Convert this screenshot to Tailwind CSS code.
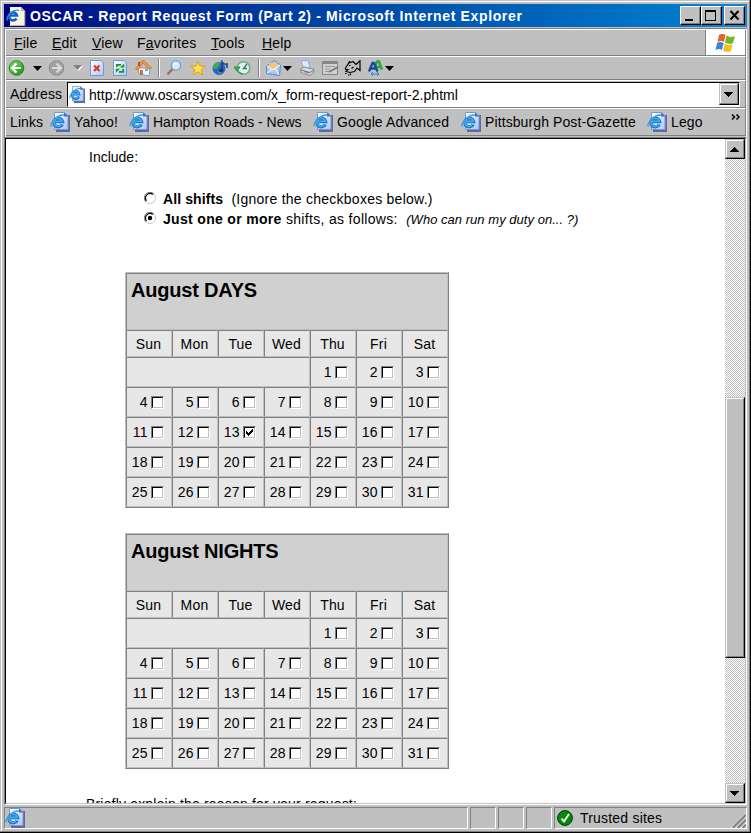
<!DOCTYPE html>
<html lang="en">
<head>
<meta charset="utf-8">
<title>OSCAR - Report Request Form (Part 2)</title>
<script src="https://cdn.jsdelivr.net/npm/@tailwindcss/browser@4"></script>
</head>
<body class="w-[751px] h-[833px] overflow-hidden bg-[#c0c0c0] text-black font-['Liberation_Sans',Arial,sans-serif] text-[14px] leading-[20px]">
<svg width="0" height="0" class="absolute">
  <defs>
    <linearGradient id="pg" x1="0" y1="0" x2="1" y2="1"><stop offset="0" stop-color="#fff"/><stop offset="1" stop-color="#a9c8f8"/></linearGradient>
    <linearGradient id="gr" x1="0" y1="0" x2="1" y2="1"><stop offset="0" stop-color="#8be070"/><stop offset="1" stop-color="#138a12"/></linearGradient>
    <symbol id="ie" viewBox="0 0 20 20">
      <path d="M6 3H20V20H6Z" fill="#65679b"/>
      <path d="M4.500 .5H14.500L18 4V17.500H4.500Z" fill="url(#pg)" stroke="#7597d8"/>
      <path d="M14 .5V4.500H18Z" fill="#3e66ba"/>
      <path d="M12.300 12.300A4.400 4.400 0 1 1 12.600 9.600H4.500" fill="none" stroke="#1c6fc0" stroke-width="3.200"/>
      <path d="M12 12A4.200 4.200 0 1 1 12.300 9.400H5" fill="none" stroke="#45aeea" stroke-width="1.600"/>
      <path d="M1.500 14.500C-1 11 9 1.500 14.500 3.300" fill="none" stroke="#3c9de0" stroke-width="1.300"/>
    </symbol>
    <symbol id="down" viewBox="0 0 9 5"><path d="M0 0H9L4.500 5Z" fill="currentColor"/></symbol>
    <pattern id="dither" width="2" height="2" patternUnits="userSpaceOnUse"><path d="M0 0H2V2H0Z" fill="#fff"/><path d="M0 0H1V1H0ZM1 1H2V2H1Z" fill="#c0c0c0"/></pattern>
  </defs>
</svg>

<div class="w-[751px] h-[833px] border-r border-b border-black">
<div class="w-[750px] h-[832px] border-t border-l border-t-[#c0c0c0] border-l-[#c0c0c0] border-r border-b border-r-[#808080] border-b-[#808080]">
<div class="w-[748px] h-[830px] border-t border-l border-white pt-[2px] pl-[2px] flex flex-col">

  <!-- Title bar -->
  <header class="w-[743px] h-[23px] flex items-center shrink-0 bg-linear-to-r from-[#000080] to-[#1084d0] text-white">
    <svg class="w-[20px] h-[20px] ml-[2px]" viewBox="0 0 20 20">
      <path d="M4 1H15L19 5V20H4Z" fill="#f7f4e6"/><path d="M19 5V20H5" fill="none" stroke="#77705e"/><path d="M15 1V5H19Z" fill="#b9b59f"/>
      <path d="M10.500 12.500A4 4 0 1 1 11 9.500H3" fill="none" stroke="#1267bd" stroke-width="2.600"/>
      <path d="M1.500 14.500C-1 11 7 2.500 13 4.500" fill="none" stroke="#2f8fe0" stroke-width="1.300"/>
    </svg>
    <span class="ml-[4px] font-bold whitespace-pre tracking-[0.65px]">OSCAR - Report Request Form (Part 2) - Microsoft Internet Explorer</span>
    <div class="ml-auto mr-[2px] flex">
      <span class="w-[21px] h-[19px] border border-t-white border-l-white border-r-black border-b-black bg-[#c0c0c0]"><svg class="w-[19px] h-[17px]" viewBox="0 0 19 17" shape-rendering="crispEdges"><path d="M18.500 0V16.500H0" fill="none" stroke="#808080"/><path d="M4 12H12V14H4Z"/></svg></span>
      <span class="w-[21px] h-[19px] border border-t-white border-l-white border-r-black border-b-black bg-[#c0c0c0]"><svg class="w-[19px] h-[17px]" viewBox="0 0 19 17" shape-rendering="crispEdges"><path d="M18.500 0V16.500H0" fill="none" stroke="#808080"/><path d="M3 3H14V14H3ZM4 5V13H13V5Z" fill-rule="evenodd"/></svg></span>
      <span class="ml-[2px] w-[21px] h-[19px] border border-t-white border-l-white border-r-black border-b-black bg-[#c0c0c0]"><svg class="w-[19px] h-[17px]" viewBox="0 0 19 17"><path d="M18.500 0V16.500H0" fill="none" stroke="#808080"/><path d="M5.500 4L13.500 12.500M13.500 4L5.500 12.500" stroke="#000" stroke-width="2"/></svg></span>
    </div>
  </header>

  <!-- Tool bands -->
  <div class="mt-[1px] w-[743px] h-[109px] shrink-0 border-t border-l border-[#808080]">
  <div class="w-[742px] h-[108px] border-t border-l border-r border-white border-r-white">
    <div class="w-[740px] h-[26px] border-b border-r border-[#808080] flex">
      <nav class="flex pl-[8px] pt-[3px] w-[699px] shrink-0 tracking-[0.2px]">
        <span class="w-[38px]"><u>F</u>ile</span><span class="w-[40px]"><u>E</u>dit</span><span class="w-[45px]"><u>V</u>iew</span><span class="w-[74px]">F<u>a</u>vorites</span><span class="w-[51px]"><u>T</u>ools</span><span><u>H</u>elp</span>
      </nav>
      <div class="flex-1 h-[25px] border-l border-[#808080] bg-white flex items-center justify-center">
        <svg class="w-[21px] h-[20px]" viewBox="0 0 21 20"><path d="M4 2Q7 0 10.500 2L9 9Q6 7 2.500 9Z" fill="#e8602c"/><path d="M11.500 2.500Q15 5 20 3L18 10Q14 12 10 9.500Z" fill="#72b82c"/><path d="M2 10Q5 8 8.700 10L7 17Q4 15 .5 17Z" fill="#3c84d8"/><path d="M9.800 10.500Q13 13 17.700 11L16 18Q12 20 8 17.500Z" fill="#f6bd25"/></svg>
      </div>
    </div>
    <div class="w-[740px] h-[24px] border-t border-t-white border-b border-r border-b-[#808080] border-r-[#808080] flex items-center pl-[2px]">
      <svg class="w-[17px] h-[16px]" viewBox="0 0 17 16"><circle cx="8.500" cy="8" r="7.300" fill="url(#gr)" stroke="#218a21"/><path d="M8.500 3.500L4 8L8.500 12.500M4.500 8H13" fill="none" stroke="#fff" stroke-width="2.200"/></svg>
      <svg class="w-[9px] h-[5px] ml-[8px]"><use href="#down"/></svg>
      <svg class="w-[17px] h-[16px] ml-[6px]" viewBox="0 0 17 16"><circle cx="8.500" cy="8" r="7.300" fill="#a2a2a2" stroke="#8a8a8a"/><path d="M8.500 3.500L13 8L8.500 12.500M12.500 8H4" fill="none" stroke="#dadada" stroke-width="2.200"/></svg>
      <svg class="w-[10px] h-[6px] ml-[8px]" viewBox="0 0 10 6"><path d="M1 1H10L5.500 6Z" fill="#fff"/><path d="M0 0H9L4.500 5Z" fill="#808080"/></svg>
      <svg class="w-[14px] h-[16px] ml-[7px]" viewBox="0 0 14 16"><path d="M.5 .5H11L13.500 3V15.500H.5Z" fill="url(#pg)" stroke="#7597d8"/><path d="M4 5.500L9.500 11M9.500 5.500L4 11" stroke="#e03316" stroke-width="2"/></svg>
      <svg class="w-[14px] h-[16px] ml-[9px]" viewBox="0 0 14 16"><path d="M.5 .5H11L13.500 3V15.500H.5Z" fill="url(#pg)" stroke="#7597d8"/><path d="M3.800 7V4.800H8M10.200 9V11.800H6" fill="none" stroke="#159625" stroke-width="1.700"/><path d="M7 7.500H11.200V3.500ZM7 8.700H2.800V12.800Z" fill="#159625"/></svg>
      <svg class="w-[17px] h-[17px] ml-[8px]" viewBox="0 0 17 17"><path d="M3 8H15L14 16L4 14Z" fill="#f5f7fb" stroke="#829ac5"/><path d="M.5 9L6 1.500L9 .5L16.500 8L14 9L8 3L3 10Z" fill="#f59a37" stroke="#be6a20" stroke-width=".7"/><path d="M4 2V6" stroke="#b84a25" stroke-width="2"/><path d="M5 10H8V15H5Z" fill="#bc7642"/><path d="M10 8H13V11H10Z" fill="#78a8e4"/></svg>
      <span class="ml-[6px] w-[2px] h-[18px] border-l border-l-[#808080] border-r border-r-white"></span>
      <svg class="w-[16px] h-[16px] ml-[6px]" viewBox="0 0 16 16"><path d="M6.500 9L1.500 14.500" stroke="#a87052" stroke-width="2.500"/><circle cx="10" cy="5.500" r="4.600" fill="#d5eaff" stroke="#6f9de0" stroke-width="1.400"/><path d="M7.500 5Q8.500 3 10.500 3" stroke="#fff" fill="none" stroke-width="1.500"/></svg>
      <svg class="w-[16px] h-[16px] ml-[8px]" viewBox="0 0 16 16"><path d="M8 1L10 6L15.300 6.200L11.200 9.500L12.700 15L8 11.800L3.300 15L4.800 9.500L.7 6.200L6 6Z" fill="#ffdf50" stroke="#d9a21b"/></svg>
      <svg class="w-[16px] h-[16px] ml-[6px]" viewBox="0 0 16 16"><circle cx="7" cy="8.500" r="6.500" fill="#2467c9"/><path d="M2 5Q5 1 8 3L7 6L4 9L1 8ZM6 10L10 9L11 12L7 14Z" fill="#3fae4b"/><path d="M10 10V2Q12 5 15 4V8" fill="none" stroke="#28477f" stroke-width="1.700"/><ellipse cx="9" cy="10.500" rx="2.300" ry="1.700" fill="#173473"/></svg>
      <svg class="w-[17px] h-[16px] ml-[6px]" viewBox="0 0 17 16"><circle cx="9.500" cy="8" r="6.300" fill="#e0f2e5" stroke="#6fae7d" stroke-width="1.600"/><path d="M13 4L9.500 8.500H13" fill="none" stroke="#356b8a" stroke-width="1.300"/><path d="M0 7H6L3 11ZM3 10Q5 14 9 14" fill="#4caf5e" stroke="#25883b"/></svg>
      <span class="ml-[7px] w-[2px] h-[18px] border-l border-l-[#808080] border-r border-r-white"></span>
      <svg class="w-[15px] h-[16px] ml-[6px]" viewBox="0 0 15 16"><path d="M.5 6L8 .5L14.500 5L13.500 15.500L.5 13.500Z" fill="#a4cafa" stroke="#5a87ce"/><path d="M3 3L10 2L12 5V8L7 10L3 8Z" fill="#f6c674"/><path d="M1 6L7 10L14 5M1 13L6 9.500M13 15L9 8.500" fill="none" stroke="#fff"/></svg>
      <svg class="w-[9px] h-[5px] ml-[2px]"><use href="#down"/></svg>
      <svg class="w-[15px] h-[16px] ml-[8px]" viewBox="0 0 15 16"><path d="M1 1L8 .5L10 8L4 9Z" fill="#dcecff" stroke="#8aa9d7"/><path d="M.5 9L4 7L13.500 9L14 12L10 15.500L1 12.500Z" fill="#d7d7d7" stroke="#888"/><path d="M1 10L10 12.500L14 10M4 11.500L9 13" stroke="#777" fill="none"/></svg>
      <svg class="w-[17px] h-[14px] ml-[7px]" viewBox="0 0 17 14"><path d="M.5 .5H15.500V13.500H.5Z" fill="#d0d0d0" stroke="#858585"/><path d="M1 2H15" stroke="#888" stroke-width="2"/><path d="M3 5.500H13M3 8H8M3 10.500H7" stroke="#999"/><path d="M7 11L16 6" stroke="#777" stroke-width="1.500"/></svg>
      <svg class="w-[17px] h-[16px] ml-[5px]" viewBox="0 0 17 16"><path d="M2 7L5 3L9 1.500L12 4.500L16 .7V10.500L13 8L10.500 11.500L6 12.500L2 11.500L4 9.500L1.500 9.500ZM4 3.500L6 1" fill="none" stroke="#000" stroke-width="1.200"/><path d="M5 5.500H6.500M7.500 8.500L9.500 7M1 13.500H2.500M4 15H5.500M6 13.500L7 15" stroke="#000" stroke-width="1.200"/></svg>
      <svg class="w-[15px] h-[16px] ml-[7px]" viewBox="0 0 15 16"><path d="M7 8L9 1.500H11L14 9.500M9 7H13" fill="none" stroke="#2ea83c" stroke-width="2.400"/><path d="M1 11.500L4.500 3H6L9.500 11.500M3 8.500H8" fill="none" stroke="#174b9c" stroke-width="2.400"/><path d="M3 14H11M5 12L3 14L5 16M9 12L11 14L9 16" fill="none" stroke="#2781d8"/></svg>
      <svg class="w-[9px] h-[5px] ml-[2px]"><use href="#down"/></svg>
    </div>
    <div class="w-[740px] h-[28px] border-t border-t-white border-b border-r border-b-[#808080] border-r-[#808080] flex">
      <span class="ml-[4px] mt-[3px] w-[57px] tracking-[0.1px]">A<u>d</u>dress</span>
      <div class="mt-[1px] w-[673px] h-[25px] border-t border-l border-t-black border-l-black border-b border-r border-b-white border-r-white bg-white flex">
        <svg class="w-[16px] h-[17px] ml-[1px] mt-[3px]" viewBox="0 0 20 20" preserveAspectRatio="none"><use href="#ie"/></svg>
        <span class="ml-[4px] mt-[2px] whitespace-nowrap tracking-[0.03px]">http://www.oscarsystem.com/x_form-request-report-2.phtml</span>
        <span class="ml-auto w-[20px] h-[22px] border-t border-l border-[#c0c0c0] border-r border-b border-r-black border-b-black bg-[#c0c0c0]"><svg class="w-[18px] h-[20px]" viewBox="0 0 18 20" shape-rendering="crispEdges"><path d="M.5 20V.5H18" fill="none" stroke="#fff"/><path d="M17.500 0V19.500H0" fill="none" stroke="#808080"/><path d="M4 8H13L8.500 13Z"/></svg></span>
      </div>
    </div>
    <div class="w-[740px] h-[28px] border-t border-t-white border-b border-r border-b-[#808080] border-r-[#808080] flex items-center pl-[4px] whitespace-nowrap tracking-[0.1px]">
      <span class="w-[40px]">Links</span>
      <div class="w-[79px] flex items-center gap-[4px]"><svg class="w-[20px] h-[20px]"><use href="#ie"/></svg><span>Yahoo!</span></div>
      <div class="w-[184px] flex items-center gap-[4px]"><svg class="w-[20px] h-[20px]"><use href="#ie"/></svg><span class="tracking-[0px]">Hampton Roads - News</span></div>
      <div class="w-[148px] flex items-center gap-[4px]"><svg class="w-[20px] h-[20px]"><use href="#ie"/></svg><span>Google Advanced</span></div>
      <div class="w-[186px] flex items-center gap-[4px]"><svg class="w-[20px] h-[20px]"><use href="#ie"/></svg><span>Pittsburgh Post-Gazette</span></div>
      <div class="flex items-center gap-[4px]"><svg class="w-[20px] h-[20px]"><use href="#ie"/></svg><span>Lego</span></div>
      <svg class="w-[9px] h-[6px] ml-auto mr-[5px] mb-[11px]" viewBox="0 0 9 6"><path d="M1 .5L3.500 3L1 5.500M5.500 .5L8 3L5.500 5.500" fill="none" stroke="#000" stroke-width="1.500"/></svg>
    </div>
  </div>
  </div>

  <!-- Document view -->
  <div class="w-[743px] h-[668px] shrink-0 border-l border-t border-[#808080] border-r border-b border-r-white border-b-white">
  <div class="w-[741px] h-[666px] border-l border-t border-black border-r border-b border-r-[#c0c0c0] border-b-[#c0c0c0] bg-white flex">
    <main class="w-[719px] h-[664px] overflow-hidden">
      <p class="ml-[83px] pt-[8px] h-[50px]">Include:</p>
      <div class="ml-[138px] flex flex-col">
        <div class="flex h-[20px] whitespace-pre"><svg class="w-[12px] h-[12px] mt-[3px] mr-[7px]" viewBox="0 0 12 12"><circle cx="6" cy="6" r="5.500" fill="#fff" stroke="#c8c8c8"/><path d="M1.900 10.100A5.500 5.500 0 0 1 10.100 1.900" fill="none" stroke="#808080"/><path d="M2.500 8.800A4.500 4.500 0 0 1 8.800 2.500" fill="none" stroke="#000" stroke-width="1.200"/></svg><span class="tracking-[0.25px]"><b class="tracking-[0.1px]">All shifts</b>  (Ignore the checkboxes below.)</span></div>
        <div class="flex h-[20px] whitespace-pre"><svg class="w-[12px] h-[12px] mt-[3px] mr-[7px]" viewBox="0 0 12 12"><circle cx="6" cy="6" r="5.500" fill="#fff" stroke="#c8c8c8"/><path d="M1.900 10.100A5.500 5.500 0 0 1 10.100 1.900" fill="none" stroke="#808080"/><path d="M2.500 8.800A4.500 4.500 0 0 1 8.800 2.500" fill="none" stroke="#000" stroke-width="1.200"/><circle cx="6" cy="6" r="2.200"/></svg><span class="tracking-[0.32px]"><b>Just one or more</b> shifts, as follows:  <i class="text-[13px] tracking-[0.03px]">(Who can run my duty on... ?)</i></span></div>
      </div>
      <div id="calendars" class="ml-[119px] mt-[43px] flex flex-col gap-[25px]"></div>
      <p class="ml-[80px] mt-[25px] whitespace-nowrap tracking-[0.18px]">Briefly explain the reason for your request:</p>
    </main>
    <!-- Scroll bar -->
    <div class="w-[20px] h-[664px] relative">
      <svg class="w-[20px] h-[664px]"><rect width="20" height="664" fill="url(#dither)"/></svg>
      <div class="absolute top-0 left-0 w-[20px] h-[20px] bg-[#c0c0c0] border-t border-l border-[#c0c0c0] border-r border-b border-r-black border-b-black"><svg class="w-[18px] h-[18px]" viewBox="0 0 18 18" shape-rendering="crispEdges"><path d="M.5 18V.5H18" fill="none" stroke="#fff"/><path d="M17.500 0V17.500H0" fill="none" stroke="#808080"/><path d="M4 12H13L8.500 7Z"/></svg></div>
      <div class="absolute top-[258px] left-0 w-[20px] h-[261px] bg-[#c0c0c0] border-t border-l border-[#c0c0c0] border-r border-b border-r-black border-b-black"><div class="w-[18px] h-[259px] border-t border-l border-white border-r border-b border-r-[#808080] border-b-[#808080]"></div></div>
      <div class="absolute bottom-0 left-0 w-[20px] h-[20px] bg-[#c0c0c0] border-t border-l border-[#c0c0c0] border-r border-b border-r-black border-b-black"><svg class="w-[18px] h-[18px]" viewBox="0 0 18 18" shape-rendering="crispEdges"><path d="M.5 18V.5H18" fill="none" stroke="#fff"/><path d="M17.500 0V17.500H0" fill="none" stroke="#808080"/><path d="M4 7H13L8.500 12Z"/></svg></div>
    </div>
  </div>
  </div>

  <!-- Status bar -->
  <footer class="mt-[2px] w-[743px] h-[22px] flex gap-[2px]">
    <div class="w-[464px] border border-t-[#808080] border-l-[#808080] border-r-white border-b-white"><svg class="w-[20px] h-[20px]"><use href="#ie"/></svg></div>
    <div class="w-[26px] border border-t-[#808080] border-l-[#808080] border-r-white border-b-white"></div>
    <div class="w-[26px] border border-t-[#808080] border-l-[#808080] border-r-white border-b-white"></div>
    <div class="w-[26px] border border-t-[#808080] border-l-[#808080] border-r-white border-b-white"></div>
    <div class="flex-1 border border-t-[#808080] border-l-[#808080] border-r-white border-b-white flex items-center">
      <svg class="w-[16px] h-[16px] ml-[2px]" viewBox="0 0 16 16"><circle cx="8" cy="8" r="7.400" fill="#078a0b" stroke="#003800"/><path d="M4.500 8.500L7 11.500L12 4" fill="none" stroke="#fff" stroke-width="1.900"/></svg>
      <span class="ml-[7px] tracking-[0.2px]">Trusted sites</span>
      <svg class="w-[16px] h-[16px] ml-auto mt-[4px]" viewBox="0 0 16 16"><path d="M1 16L16 1M6 16L16 6M11 16L16 11" stroke="#fff"/><path d="M2.500 16L16 2.500M7.500 16L16 7.500M12.500 16L16 12.500" stroke="#808080" stroke-width="2"/></svg>
    </div>
  </footer>
</div>
</div>
</div>

<script>
const cell = 'border border-t-[#808080] border-l-[#808080] border-r-[#c0c0c0] border-b-[#c0c0c0]';
const tick = '<svg class="w-[9px] h-[9px]" viewBox="0 0 9 9" shape-rendering="crispEdges"><path d="M1 3H2V4H3V5H4V4H5V3H6V2H7V1H8V4H7V5H6V6H5V7H4V8H3V7H2V6H1Z"/></svg>';
function box(on) {
  return `<span class="w-[13px] h-[13px] border border-t-[#808080] border-l-[#808080] border-r-white border-b-white bg-white"><span class="block w-[11px] h-[11px] border border-t-black border-l-black border-r-[#c0c0c0] border-b-[#c0c0c0]">${on ? tick : ''}</span></span>`;
}
function calendar(title, picked) {
  let h = `<section class="w-[324px] h-[236px] border border-t-[#c0c0c0] border-l-[#c0c0c0] border-r-[#808080] border-b-[#808080] bg-[#e7e7e7] grid grid-cols-7 grid-rows-[57px_27px_repeat(5,30px)]">
    <h2 class="col-span-7 ${cell} bg-[#d0d0d0] font-bold text-[20px] leading-[24px] tracking-[-0.2px] pl-[4px] pt-[4px]">${title}</h2>`;
  for (const d of ['Sun', 'Mon', 'Tue', 'Wed', 'Thu', 'Fri', 'Sat']) h += `<div class="${cell} text-center pt-[3px] pr-[1px] tracking-[0.2px]">${d}</div>`;
  h += `<div class="col-span-4 ${cell}"></div>`;
  for (let n = 1; n <= 31; n++) h += `<div class="${cell} flex justify-end items-center gap-[3px] pr-[7px] pt-[1px]"><span class="-mt-[1px] tracking-[0.4px]">${n}</span>${box(n === picked)}</div>`;
  return h + '</section>';
}
document.getElementById('calendars').innerHTML = calendar('August DAYS', 13) + calendar('August NIGHTS', 0);
</script>
</body>
</html>
